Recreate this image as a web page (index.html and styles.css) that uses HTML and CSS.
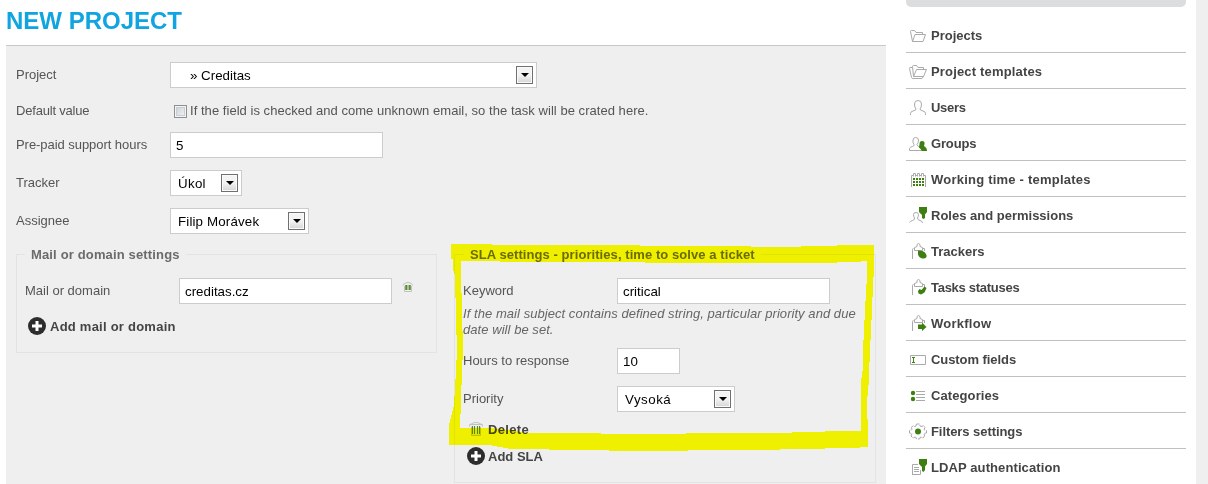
FILE: index.html
```html
<!DOCTYPE html>
<html lang="en">
<head>
<meta charset="utf-8">
<title>New project</title>
<link rel="stylesheet" href="styles.css">
</head>
<body>
<div class="page">
  <main class="main">
    <h1 class="title"><span class="t-title">NEW PROJECT</span></h1>
    <section class="panel">
      <div class="row"><span class="label">Project</span><div class="select select-project"><span>» Creditas</span><i class="arrow"></i></div></div>
      <div class="row row-check"><span class="label l2">Default value</span><div class="check-wrap"><i class="check"></i><span class="label l3">If the field is checked and come unknown email, so the task will be crated here.</span></div></div>
      <div class="row"><span class="label l4">Pre-paid support hours</span><input class="input" value="5"></div>
      <div class="row"><span class="label">Tracker</span><div class="select select-tracker"><span class="v1">Úkol</span><i class="arrow"></i></div></div>
      <div class="row"><span class="label">Assignee</span><div class="select select-assignee"><span class="v2">Filip Morávek</span><i class="arrow"></i></div></div>
      <div class="groups">
        <div class="group group-mail">
          <div class="legend"><span class="rule-start"></span><b class="g1">Mail or domain settings</b><span class="rule-end"></span></div>
          <div class="group-row"><span class="label">Mail or domain</span><input class="input" value="creditas.cz">
            <svg class="trash-small" width="12" height="12" viewBox="0 0 12 12"><path d="M1 4.500Q1 3 3 2.500Q4 1.500 6 1.500Q8 1.500 9 2.500Q10.500 3 10.500 4.500M2.500 5V10.500H9.500V5" fill="none" stroke="#bfc3bb"/><path d="M3 4H9V9H3Z" fill="#7fa35b"/><path d="M4.500 4V9M7.500 4V9" stroke="#5d8a38"/><path d="M6 4V9" stroke="#d8e2ce"/></svg>
          </div>
          <a class="action add-mail"><svg width="18" height="18" viewBox="0 0 18 18"><circle cx="9" cy="9" r="9" fill="#2d2d2d"/><path d="M9 4V14M4 9H14" stroke="#fff" stroke-width="3"/></svg><b class="a1">Add mail or domain</b></a>
        </div>
        <div class="group group-sla">
          <div class="legend"><span class="rule-start"></span><b class="g2">SLA settings - priorities, time to solve a ticket</b><span class="rule-end"></span></div>
          <div class="group-row"><span class="label">Keyword</span><input class="input" value="critical"></div>
          <p class="hint"><span>If the mail subject contains defined string, particular priority and due</span><br><span>date will be set.</span></p>
          <div class="group-row row-hours"><span class="label">Hours to response</span><input class="input input-small" value="10"></div>
          <div class="group-row row-priority"><span class="label">Priority</span><div class="select select-priority"><span class="v3">Vysoká</span><i class="arrow"></i></div></div>
          <a class="action delete"><svg width="14" height="14" viewBox="0 0 14 14"><path d="M2 4.500H12V13.500H2Z" fill="#dfe3da"/><path d="M.5 4.500V3Q.5 2 2.500 2Q4 .5 7 .5Q10 .5 11.500 2Q13.500 2 13.500 3V4.500M2.500 4.500V13.500H11.500V4.500M1 2.500H13" fill="none" stroke="#bdc0bb"/><path d="M3.500 4V12M5.500 4V12M8.500 4V12M10.500 4V12" stroke="#57862c"/></svg><b class="a2">Delete</b></a>
          <a class="action add-sla"><svg width="18" height="18" viewBox="0 0 18 18"><circle cx="9" cy="9" r="9" fill="#2d2d2d"/><path d="M9 4V14M4 9H14" stroke="#fff" stroke-width="3"/></svg><b>Add SLA</b></a>
        </div>
      </div>
    </section>
  </main>
  <aside class="sidebar">
    <div class="cap"></div>
    <nav class="menu">
      <a class="item"><svg class="icon" viewBox="0 0 20 20"><path d="M4.500 16.500L2.500 6.500Q2.500 5.500 3.500 5.500H6.500L8 7.500H14.500V9.500M4.500 16.500L7 9.500H17.500L15 16.500Z"/></svg><span>Projects</span></a>
      <a class="item"><svg class="icon" viewBox="0 0 20 20"><path d="M5.500 15.500L4.500 5.500Q4.500 4.500 5.500 4.500H8.500L10 6.500H15.500V8.500M5.500 15.500L8.500 8.500H18.500L15.500 15.500ZM4 6.500H2Q1.500 6.500 1.500 7.500L3.500 16.500Q4 17.500 5 17.500H14L15.500 15.500"/></svg><span class="m2">Project templates</span></a>
      <a class="item"><svg class="icon" viewBox="0 0 20 20"><path d="M2.500 18V16.500Q2.500 14.500 5 14Q8 13.500 8 12Q6.500 10.500 6.500 7Q6.500 3.500 10 3.500Q13.500 3.500 13.500 7Q13.500 10.500 12 12Q12 13.500 15 14Q17.500 14.500 17.500 16.500V18"/></svg><span class="m3">Users</span></a>
      <a class="item"><svg class="icon" viewBox="0 0 20 20"><path d="M14 17.500H1.500V15.500Q2 14 4.500 13.500Q6.500 13 6 11.500Q4.500 9.500 5 7Q5.500 4.500 7.500 4.500Q10.500 4.500 10.500 7Q10.500 10 9 11.500Q9 13 11.500 14"/><path class="green" d="M11.500 11Q11.500 8 14 8Q17 8 16.500 11L16 13Q19 14.500 19 18H14Q13 16 11 14.500Z"/></svg><span class="m4">Groups</span></a>
      <a class="item"><svg class="icon" viewBox="0 0 20 20"><path d="M3.500 18V6.500H5M8 6.500H9.500M12 6.500H13.500M16 6.500H17.500V18M5.500 7.500V4.500H7.500V7.500M13.500 7.500V4.500H15.500V7.500M9.500 7.500V4.500H11.500V7.500"/><path class="dots" d="M5 10H16M5 13H16M5 16H16"/></svg><span class="m5">Working time - templates</span></a>
      <a class="item"><svg class="icon" viewBox="0 0 20 20"><path d="M1.500 17.500Q2 16 4.500 15.500Q7 15 6.500 13Q5.500 11.500 5.500 9.500Q5.500 7.500 8 7.500Q10.500 7.500 10.500 9.500Q10.500 11.500 9.500 13Q9.500 15 12 15.500Q14.500 16 14.500 18"/><path class="green" d="M11 2H19V7L17 9.500V13L15.500 14L14 13V10L11 7Z"/></svg><span>Roles and permissions</span></a>
      <a class="item"><svg class="icon" viewBox="0 0 20 20"><path d="M4.500 18V8.500Q4.500 7.500 5.500 7.500M6.500 9.500V6.500L9 5.500V3.500L10.500 2.500L12 3.500V5.500L14.500 6.500V9.500H6.500M15 7.500H16.500V10"/><path class="green" d="M10 9.500L14.500 10Q17.500 11 18.500 14V16Q17 18 14.500 17.500Q11 17 10 13.500Z"/></svg><span>Trackers</span></a>
      <a class="item"><svg class="icon" viewBox="0 0 20 20"><path d="M4.500 18V8.500Q4.500 7.500 5.500 7.500M6.500 9.500V6.500L9 5.500V3.500L10.500 2.500L12 3.500V5.500L14.500 6.500V9.500H6.500M15 7.500H16.500V10"/><path class="green" d="M10 14L11.500 12L13.500 13L16.500 9.500L18.500 11L16.500 15.500L13 17.500L10.500 16.500Z"/></svg><span class="m8">Tasks statuses</span></a>
      <a class="item"><svg class="icon" viewBox="0 0 20 20"><path d="M4.500 18V8.500Q4.500 7.500 5.500 7.500M6.500 9.500V6.500L9 5.500V3.500L10.500 2.500L12 3.500V5.500L14.500 6.500V9.500H6.500M15 7.500H16.500V10"/><path class="green" d="M10 11.500H14V9.500L18.500 14L14 18V16H10Z"/></svg><span class="m9">Workflow</span></a>
      <a class="item"><svg class="icon" viewBox="0 0 20 20"><path d="M2.500 6.500H17.500V15.500H2.500Z"/><path class="caret" d="M4 8.500H7M4 13.500H7M5.500 8.500V13.500"/></svg><span class="m10">Custom fields</span></a>
      <a class="item"><svg class="icon" viewBox="0 0 20 20"><path d="M8 6.500H17M8 9.500H17M8 12.500H17M8 15.500H17"/><circle class="green" cx="5" cy="8" r="2.200"/><circle class="green" cx="5" cy="14" r="2.200"/></svg><span class="m11">Categories</span></a>
      <a class="item"><svg class="icon" viewBox="0 0 20 20"><path d="M8 5L8.500 3H11.500L12 5L14 5.500L15.500 4.500L17 6.500L16 8.500L18.500 9.500V12L16 12.500L16.500 15L15 17L12.500 16L11.500 18H8.500L7.500 16L5 17L3 15L4 12.500L1.500 12V9.500L4 8.500L3.500 6.500L5 4.500L6.500 5.500Z" stroke-dasharray="5 1"/><circle class="green" cx="10" cy="10.500" r="3"/></svg><span class="m10">Filters settings</span></a>
      <a class="item"><svg class="icon" viewBox="0 0 20 20"><path d="M4.500 18V7.500H10M4.500 17.500H12.500V13M6 10.500H11M6 12.500H11M6 14.500H11"/><path class="green" d="M11 2H19V7L17 9.500V13L15.500 15L14 14V10L11 7Z"/></svg><span class="m11">LDAP authentication</span></a>
    </nav>
  </aside>
  <div class="edge"></div>
  <svg class="marker" width="1208" height="484" viewBox="0 0 1208 484"><path fill-rule="evenodd" d="M451 244H492V245H640V246H751V247H801V246H837V245H874V269L873 285L872 310L870 350L869 375L868 395L867 397V419H868V447H860V448H825V449H780V450H688V451H609V450H549V449H510L500 447L489 445H449V425L454 405L456 370L457 350L456 320L455 275L453 269V259H451ZM461 261H500V262H640L650 263H837V262H861V261H867V275L865 310L863 350V368L861 381V431H825V432H792V433H686V434H601V433H525L510 430L489 428H460L461 400L462 370L463 350L462 310L461 275Z"/></svg>
</div>
</body>
</html>
```
FILE: styles.css
```css
* { box-sizing: border-box; }
body { margin: 0; width: 1208px; height: 484px; overflow: hidden; background: #fff; font: 13px/16px "Liberation Sans", Arial, sans-serif; color: #555; }
.page { position: relative; display: flex; height: 484px; padding-left: 6px; overflow: hidden; }
.main { width: 880px; flex: none; }
.title { margin: 0; height: 45px; padding-top: 7px; font-size: 24px; line-height: 28px; color: #10a4e0; }
.panel { height: 439px; border-top: 1px solid #c8c8c8; background: #efefef; padding: 16px 10px 0; }
.row, .group-row { display: flex; align-items: center; height: 26px; margin-bottom: 12px; }
.row > .label:first-child { width: 154px; flex: none; padding-bottom: 1px; }
.row > .l2:first-child { padding-bottom: 0; padding-top: 1px; }
.row-check { height: 20px; margin-bottom: 12px; }
.label, b, .hint span, .item span, .select span, .t-title { white-space: nowrap; }
.check-wrap { display: flex; align-items: center; padding-left: 4px; gap: 3px; }
.check { width: 13px; height: 13px; border: 1px solid #8e8f8f; background: linear-gradient(135deg, #c8cdd4, #f6f6f6); box-shadow: inset 0 0 0 1px #f4f4f4, inset 0 0 0 2px #c9ced3; margin-top: 2px; }
.check-wrap .label { padding-top: 1px; }
.input { width: 213px; height: 26px; border: 1px solid #ccc; border-radius: 0; background: #fff; padding: 1px 5px 0; font: 13.33px "Liberation Sans", Arial, sans-serif; color: #000; outline: 0; }
.input-small { width: 63px; }
.select { display: flex; align-items: center; justify-content: space-between; height: 26px; border: 1px solid #ccc; background: #fff; color: #000; padding: 0 3px 0 7px; font-size: 13.33px; }
.select span { padding-top: 1px; }
.select-project { width: 367px; padding-left: 19px; }
.select-tracker { width: 72px; }
.select-assignee { width: 139px; }
.select-priority { width: 118px; }
.arrow { width: 17px; height: 18px; border: 1px solid #707070; background: linear-gradient(#f3f3f3 50%, #d5d5d5); box-shadow: inset 0 0 0 1px #fafafa; display: flex; align-items: center; justify-content: center; }
.arrow::after { content: ""; border: 4px solid transparent; border-top-color: #000; border-bottom: 0; }
.groups { display: flex; gap: 17px; }
.group { width: 421px; border: solid #e3e3e3; border-width: 0 1px 1px; margin-top: 8px; }
.group-mail { height: 99px; }
.group-sla { width: 422px; height: 229px; }
.legend { display: flex; align-items: center; height: 16px; margin-top: -8px; color: #6b6b6b; }
.legend b { padding: 2px 6px 0; }
.rule-start { width: 8px; border-top: 1px solid #e3e3e3; margin-top: 1px; }
.rule-end { flex: 1; border-top: 1px solid #e3e3e3; margin-top: 1px; }
.group-sla .rule-start { width: 9px; }
.group-row { padding-left: 8px; margin: 16px 0 0; }
.group-row .label { width: 154px; flex: none; padding-bottom: 1px; }
.trash-small { margin: -8px 0 0 10px; }
.action { display: flex; align-items: center; color: #444; }
.action b { padding-top: 2px; }
.add-mail { height: 18px; margin: 13px 0 0 11px; gap: 4px; }
.hint { margin: 2px 0 0 8px; font-style: italic; color: #666; letter-spacing: .055px; }
.row-hours { margin-top: 10px; }
.row-priority { margin-top: 12px; }
.delete { height: 16px; margin: 9px 0 0 14px; gap: 5px; }
.add-sla { height: 18px; margin: 10px 0 0 12px; gap: 3px; }
.sidebar { width: 280px; margin-left: 20px; }
.cap { height: 7px; background: #dcdddf; border-radius: 0 0 5px 5px; }
.menu { padding-top: 10px; }
.item { display: flex; align-items: center; height: 36px; border-bottom: 1px solid #c0c0c0; padding-left: 2px; gap: 3px; font-weight: bold; color: #444; }
.item span { padding-top: 2px; }
.icon { width: 20px; height: 20px; margin-top: 1px; flex: none; fill: none; stroke: #aaa; }
.icon .green { fill: #3f7f12; stroke: none; }
.icon .dots { stroke: #3f7f12; stroke-width: 2; stroke-dasharray: 2 1; }
.icon .caret { stroke: #3f7f12; }
.l2 { letter-spacing: -.2px; }
.l3 { letter-spacing: .04px; }
.l4 { letter-spacing: -.05px; }
.g1 { letter-spacing: .15px; }
.g2 { letter-spacing: .07px; }
.a1 { letter-spacing: .24px; }
.a2 { letter-spacing: .35px; }
.v1 { letter-spacing: .3px; }
.v2 { letter-spacing: .15px; }
.v3 { letter-spacing: .5px; }
.m2 { letter-spacing: .17px; }
.m3 { letter-spacing: -.3px; }
.m4 { letter-spacing: -.15px; }
.m5 { letter-spacing: .22px; }
.m8 { letter-spacing: -.28px; }
.m9 { letter-spacing: .25px; }
.m10 { letter-spacing: -.07px; }
.m11 { letter-spacing: .1px; }
.edge { width: 12px; margin-left: 10px; background: #efefef; }
.marker { position: absolute; left: 0; top: 0; fill: #ff0; shape-rendering: crispEdges; mix-blend-mode: multiply; pointer-events: none; }
```
